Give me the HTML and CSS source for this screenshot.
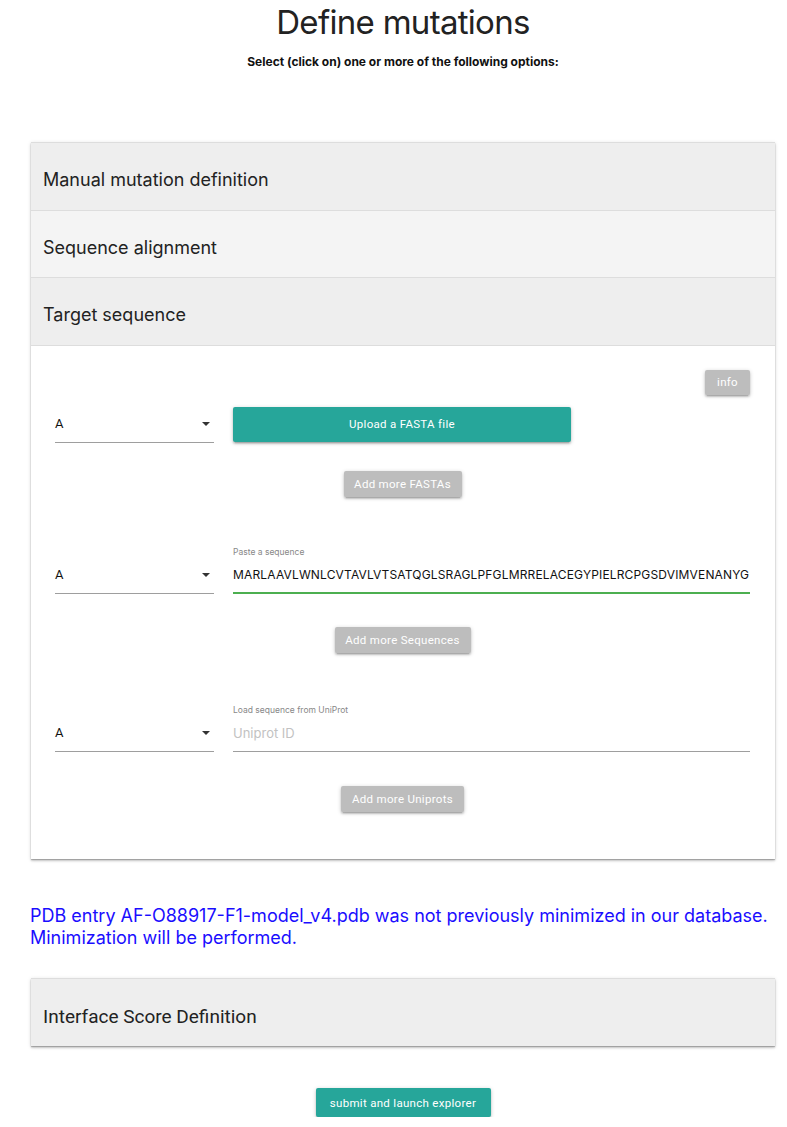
FILE: index.html
```html
<!DOCTYPE html>
<html>
<head>
<meta charset="utf-8">
<link rel="stylesheet" href="styles.css">
</head>
<body>
<main class="page">
<h1 class="title">Define mutations</h1>
<p class="subtitle">Select (click on) one or more of the following options:</p>

<div class="card">
  <div class="head head-a">Manual mutation definition</div>
  <div class="head head-b">Sequence alignment</div>
  <div class="head head-a">Target sequence</div>
  <div class="body">
    <div class="info-row"><button class="btn grey small">info</button></div>

    <div class="row r1">
      <div class="select"><span>A</span><span class="caret"></span></div>
      <div class="field"><button class="btn teal upload">Upload a FASTA file</button></div>
    </div>
    <div class="more m1"><button class="btn grey">Add more FASTAs</button></div>

    <div class="row r2">
      <div class="select"><span>A</span><span class="caret"></span></div>
      <div class="field input">
        <div class="label">Paste a sequence</div>
        <div class="value active">MARLAAVLWNLCVTAVLVTSATQGLSRAGLPFGLMRRELACEGYPIELRCPGSDVIMVENANYG</div>
      </div>
    </div>
    <div class="more m2"><button class="btn grey">Add more Sequences</button></div>

    <div class="row r3">
      <div class="select"><span>A</span><span class="caret"></span></div>
      <div class="field input">
        <div class="label">Load sequence from UniProt</div>
        <div class="value placeholder">Uniprot ID</div>
      </div>
    </div>
    <div class="more m3"><button class="btn grey">Add more Uniprots</button></div>
  </div>
</div>

<p class="notice">PDB entry AF-O88917-F1-model_v4.pdb was not previously minimized in our database. Minimization will be performed.</p>

<div class="card card2">
  <div class="head head-c">Interface Score Definition</div>
</div>

<div class="submit-row"><button class="btn teal submit">submit and launch explorer</button></div>
</main>
</body>
</html>
```

FILE: styles.css
```css
* { box-sizing: border-box; }
body {
  margin: 0;
  width: 787px;
  font-family: Inter, "Noto Sans", sans-serif;
  color: #222;
  background: #fff;
}
.page {
  display: block;
  margin: 0 12px 0 31px;
}
.title {
  margin: 0;
  padding-top: 2px;
  text-align: center;
  font-weight: 400;
  font-size: 33px;
  letter-spacing: -0.7px;
  line-height: 40px;
  color: #222;
}
.subtitle {
  margin: 12px 0 0;
  text-align: center;
  font-weight: 700;
  font-size: 12px;
  line-height: 16px;
  color: #111;
}
.card {
  margin-top: 72px;
  background: #fff;
  box-shadow: 0 2px 2px rgba(0,0,0,0.14), 0 1px 4px rgba(0,0,0,0.14), 0 1px 1px rgba(0,0,0,0.2);
  border-top: 1px solid #ddd;
}
.head {
  height: 67.5px;
  display: flex;
  align-items: center;
  padding-left: 12px;
  padding-top: 7px;
  font-size: 18px;
  color: #222;
  border-bottom: 1px solid #ddd;
}
.head-a { background: #eeeeee; }
.head-b { background: #f4f4f4; }
.head.head-c {
  background: #eeeeee;
  font-family: Roboto, sans-serif;
  font-size: 19px;
  border-bottom: none;
  padding-top: 8px;
}
.body {
  padding: 24px 25px 47px 24px;
}
.info-row {
  display: flex;
  justify-content: flex-end;
}
.btn {
  border: none;
  border-radius: 2px;
  font-family: Roboto, sans-serif;
  color: #fff;
  font-size: 11.5px;
  letter-spacing: 0.3px;
  white-space: nowrap;
  padding: 0;
  box-shadow: 0 2px 2px rgba(0,0,0,0.14), 0 3px 1px -2px rgba(0,0,0,0.12), 0 1px 4px rgba(0,0,0,0.2);
}
.grey { background: #bdbdbd; height: 26px; }
.grey.small { width: 45px; height: 25px; }
.teal { background: #26a69a; }
.row {
  display: flex;
  align-items: flex-end;
}
.select {
  width: 159px;
  height: 37px;
  border-bottom: 1px solid #9e9e9e;
  display: flex;
  align-items: center;
  justify-content: space-between;
  font-family: Roboto, sans-serif;
  font-size: 13px;
  color: #111;
  padding-right: 4px;
}
.caret {
  width: 0; height: 0;
  border-left: 4px solid transparent;
  border-right: 4px solid transparent;
  border-top: 4px solid #333;
}
.field { flex: 1; margin-left: 19px; }
.r1 { margin-top: 11px; }
.upload {
  width: 338px;
  height: 35px;
  margin-bottom: 1px;
}
.more { display: flex; justify-content: center; }
.m1 { margin-top: 28px; }
.m1 .btn { width: 118px; }
.r2 { margin-top: 50px; }
.r3 { margin-top: 52px; }
.label {
  font-size: 8.5px;
  color: #888;
  line-height: 11px;
}
.value {
  font-size: 12px;
  letter-spacing: 0.16px;
  line-height: 28px;
  height: 36px;
  padding-top: 3px;
  border-bottom: 1px solid #9e9e9e;
  white-space: nowrap;
  overflow: hidden;
}
.value.active { border-bottom: 2px solid #4caf50; color: #111; }
.value.placeholder { color: #c2c2c2; font-size: 13px; letter-spacing: 0; }
.m2 { margin-top: 33px; }
.m2 .btn { width: 136px; }
.m3 { margin-top: 34px; }
.m3 .btn { width: 123px; }
.notice {
  margin: 46px 0 0 -1px;
  font-size: 18px;
  line-height: 22px;
  color: #1a0dff;
}
.card2 {
  margin-top: 29px;
}
.submit-row {
  display: flex;
  justify-content: center;
  margin-top: 42px;
}
.submit {
  width: 175px;
  height: 29px;
}
```
